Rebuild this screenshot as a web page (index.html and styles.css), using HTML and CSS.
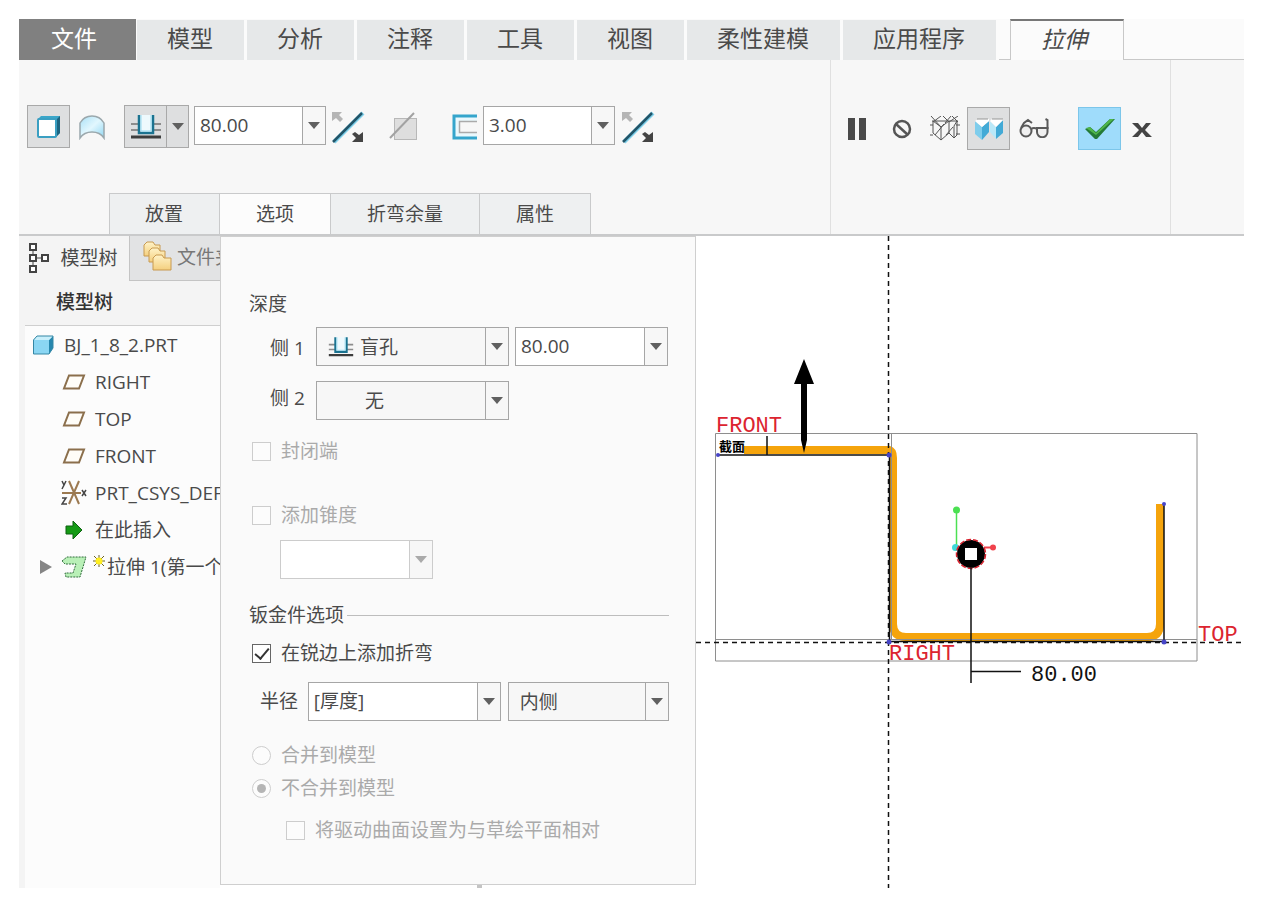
FILE: index.html
```html
<!DOCTYPE html>
<html lang="zh-CN">
<head>
<meta charset="utf-8">
<title>拉伸</title>
<link rel="stylesheet" href="styles.css">
</head>
<body>
<svg width="0" height="0" class="defs" aria-hidden="true">
  <defs>
    <linearGradient id="blueFace" x1="0" y1="0" x2="1" y2="1"><stop offset="0" stop-color="#a9e0f6"/><stop offset="0.5" stop-color="#e2f7fe"/><stop offset="1" stop-color="#8fd6f2"/></linearGradient>
    <linearGradient id="folderFace" x1="0" y1="0" x2="0" y2="1"><stop offset="0" stop-color="#fff3c8"/><stop offset="1" stop-color="#f4cf7e"/></linearGradient>
    <symbol id="blind" viewBox="0 0 32 26">
      <path d="M1 10h30M1 16h30" stroke="#8d8d8d" stroke-width="2"/>
      <path d="M9 1v18h14V1" fill="#eef9fd" stroke="#1b7390" stroke-width="2.5"/>
      <path d="M11 1v16h10V1" fill="none" stroke="#9adcf2" stroke-width="1"/>
      <path d="M1 23h30" stroke="#3d3d3d" stroke-width="3"/>
    </symbol>
    <symbol id="flip" viewBox="0 0 34 34">
      <path d="M3 32 32 3" stroke="#7fd0ea" stroke-width="4"/>
      <path d="M2 32 31 3" stroke="#215468" stroke-width="2.5"/>
      <path d="M1 2h10l-3 3 4 4-3 3-4-4-4 3z" fill="#b5b5b5"/>
      <path d="M32 32H21l4-4-4-4 3-2 4 3 4-3z" fill="#444"/>
    </symbol>
    <symbol id="plane" viewBox="0 0 24 16">
      <path d="M7 1.5h15l-5 13H2z" fill="#fffdf8" stroke="#8b6f4c" stroke-width="2"/>
    </symbol>
  </defs>
</svg>
<div class="app">
  <nav class="tabs">
    <button class="tab tab-file">文件</button>
    <button class="tab">模型</button>
    <button class="tab">分析</button>
    <button class="tab">注释</button>
    <button class="tab">工具</button>
    <button class="tab">视图</button>
    <button class="tab">柔性建模</button>
    <button class="tab">应用程序</button>
    <span class="tab-gap"></span>
    <button class="tab tab-active">拉伸</button>
    <span class="tab-rest"></span>
  </nav>

  <section class="ribbon">
    <div class="group group-main">
      <div class="tools">
        <button class="tool pressed" aria-label="实体"><svg width="26" height="26" viewBox="0 0 26 26"><path d="M2 5l3-3h19v17l-4 4z" fill="#3aa6c9"/><path d="M20 6l4-4v17l-4 4z" fill="#1d6480"/><rect x="2" y="5" width="18" height="18" rx="1" fill="#fff" stroke="#3a9fc2" stroke-width="2"/></svg></button>
        <button class="tool" aria-label="曲面"><svg width="26" height="26" viewBox="0 0 26 26"><path d="M1 24V9Q5 2 13 2q8 0 12 7v15q-4-6-12-6T1 24z" fill="url(#blueFace)" stroke="#9ba8ad" stroke-width="1.500"/></svg></button>
        <div class="split">
          <button class="split-main" aria-label="盲孔"><svg width="32" height="26"><use href="#blind"/></svg></button>
          <button class="split-arrow" aria-label="深度选项"><i class="caret"></i></button>
        </div>
        <div class="combo combo-tool"><input aria-label="深度值" value="80.00"><button aria-label="深度列表"><i class="caret"></i></button></div>
        <button class="flat" aria-label="反向深度"><svg width="34" height="34"><use href="#flip"/></svg></button>
        <button class="flat flat-cut" aria-label="移除材料"><svg width="30" height="30" viewBox="0 0 30 30"><rect x="5.500" y="6.500" width="22" height="21" fill="#dedede" stroke="#b8b8b8"/><path d="M1 26 25 1" stroke="#a2a2a2" stroke-width="2"/></svg></button>
        <button class="flat flat-thick" aria-label="加厚"><svg width="26" height="28" viewBox="0 0 26 28"><path d="M26 3H3v22h23" fill="#eaf8fd" stroke="#35a5cc" stroke-width="3"/><path d="M26 8.500H8.500v11H26" fill="#f7f7f7" stroke="#aaa" stroke-width="1.500"/></svg></button>
        <div class="combo combo-tool"><input aria-label="厚度值" value="3.00"><button aria-label="厚度列表"><i class="caret"></i></button></div>
        <button class="flat flat-last" aria-label="反向厚度"><svg width="34" height="34"><use href="#flip"/></svg></button>
      </div>
      <div class="subtabs">
        <button class="subtab">放置</button>
        <button class="subtab subtab-on">选项</button>
        <button class="subtab">折弯余量</button>
        <button class="subtab">属性</button>
      </div>
    </div>
    <div class="group group-ctl">
      <button class="ctl" aria-label="暂停"><svg width="18" height="22"><path d="M0 0h7v22H0zM11 0h7v22h-7z" fill="#4a4a4a"/></svg></button>
      <button class="ctl ctl-no" aria-label="无预览"><svg width="20" height="20" viewBox="0 0 20 20"><circle cx="10" cy="10" r="8" fill="none" stroke="#555" stroke-width="2.500"/><path d="M4 5l12 11" stroke="#555" stroke-width="2.500"/></svg></button>
      <button class="ctl" aria-label="分离预览"><svg width="30" height="26" viewBox="0 0 30 26" fill="none" stroke="#555"><path d="M2 5h26M3 5v12l8 7 8-7V5l-8 6zM11 11v13M19 17l5 5 3-3V5l-3 5v12M0 9h3M0 19h3M26 9h4M26 18h4M1 0l10 11M11 0 3 6M13 0l6 6M21 0l-6 7M28 0l-9 6M22 0l6 6M5 19 14 8M16 19l7-8"/></svg></button>
      <button class="tool pressed" aria-label="连接预览"><svg width="28" height="22" viewBox="0 0 28 22"><path d="M0 3v13l7 6V9z" fill="#7fcdec"/><path d="M14 3v11l-7 8V9z" fill="#43aad6"/><path d="M0 3l3-2h11v2L7 9z" fill="#fff"/><path d="M15 3v11l6 7V9z" fill="#b9e8f8"/><path d="M28 2v13l-7 6V9z" fill="#43aad6"/><path d="M15 3l2-2h11v1l-7 7z" fill="#fff"/><path d="M2 1h11M17 1h11" stroke="#969696"/></svg></button>
      <button class="ctl ctl-view" aria-label="校验"><svg width="30" height="20" viewBox="0 0 30 20" fill="none" stroke="#5a5a5a" stroke-width="2"><circle cx="7" cy="13" r="5.500" fill="#f0f0f0"/><path d="M18 10h10.500v4a5 5 0 0 1-10.500 0z" fill="#f0f0f0"/><path d="M12 11q3-2 6 0M2 10l3-5 4-3 4 3M28.500 11V2l-2-1"/></svg></button>
      <button class="tool confirm" aria-label="确定"><svg width="32" height="22" viewBox="0 0 32 22"><path d="M1 11l5-2 6 5L26 1h5L13 21h-2z" fill="#247a37"/><path d="M2 10l4-1 6 6L26 1h4L12 17z" fill="#4fb64a"/></svg></button>
      <button class="ctl ctl-cancel" aria-label="取消"><svg width="20" height="16" viewBox="0 0 20 16"><path d="M0 1h6l4 5 4-5h5l-6 7 7 7h-6l-4-5-4 5H0l7-7z" fill="#444"/></svg></button>
    </div>
    <div class="group group-rest"></div>
  </section>

  <main class="work">
    <aside class="tree">
      <div class="tree-tabs">
        <button class="tree-tab"><svg width="22" height="30" viewBox="0 0 22 30" fill="#fff" stroke="#444" stroke-width="2"><path d="M5 8v14M8 15h6" stroke-width="1"/><path d="M2 1h6v6H2zM2 12h6v6H2zM2 23h6v6H2zM14 12h6v6h-6z"/></svg>模型树</button>
        <button class="tree-tab tree-tab-off"><svg width="30" height="32" viewBox="0 0 30 32" fill="url(#folderFace)" stroke="#c89a50"><path d="M1 15V4l3-3h6l2 3h5v11z"/><path d="M6 21V10l3-3h6l2 3h5v11z"/><path d="M10 29V17l3-3h6l2 3h7v12z"/></svg>文件夹</button>
      </div>
      <h2 class="tree-title">模型树</h2>
      <ul class="tree-list">
        <li class="root"><svg width="22" height="20" viewBox="0 0 22 20"><path d="M1 5l4-4h16v12l-4 6H2z" fill="#8ad6f3"/><path d="M17 5l4-4v12l-4 6z" fill="#2787ae"/><path d="M1 5l4-4h16l-4 4z" fill="#c8effb"/><path d="M1.500 5 5 1h16v12l-4 6H1.500z" fill="none" stroke="#3487a5"/></svg>BJ_1_8_2.PRT</li>
        <li><svg width="24" height="16"><use href="#plane"/></svg>RIGHT</li>
        <li><svg width="24" height="16"><use href="#plane"/></svg>TOP</li>
        <li><svg width="24" height="16"><use href="#plane"/></svg>FRONT</li>
        <li class="csys"><svg width="26" height="26" viewBox="0 0 26 26" fill="none"><path d="M8 1l10 23M18 1 8 24M1 13h19" stroke="#9c7950" stroke-width="2"/><path d="M1 1l2 4 2-4M3 5 1 9M1 18h4l-4 6h5M21 10l4 6M25 10l-4 6" stroke="#444" stroke-width="1.500"/></svg>PRT_CSYS_DEF</li>
        <li><svg width="24" height="20" viewBox="0 0 24 20"><path d="M4 6h7V1l9 9-9 9v-5H4z" fill="#159a15" stroke="#0c6110"/></svg>在此插入</li>
        <li class="feature"><svg width="12" height="14"><path d="M0 0l12 7-12 7z" fill="#858585"/></svg><svg width="26" height="24" viewBox="0 0 26 24"><path d="M1 6l5-4h19l-6 20H5l-1-4h8l3-9H4z" fill="#b9f0b7"/><path d="M1 6l5-4h19l-6 20H5l-1-4h8l3-9H4z" fill="none" stroke="#2f6d3b" stroke-dasharray="2 1"/></svg><svg class="spark" width="12" height="12" viewBox="0 0 12 12"><path d="M6 0v12M0 6h12M1 1l10 10M11 1 1 11" stroke="#6c6220"/><circle cx="6" cy="6" r="3.500" fill="#ffef20"/></svg><span>拉伸 1(第一个</span></li>
      </ul>
    </aside>

    <div class="options-col">
      <form class="options">
        <h3 class="heading">深度</h3>
        <div class="row row-side">
          <label for="side1">侧 1</label>
          <div class="pick pick-wide pick-icon"><svg width="26" height="24" viewBox="0 0 32 26"><use href="#blind" width="32" height="26"/></svg><select id="side1"><option>盲孔</option></select></div>
          <div class="combo combo-value"><input aria-label="侧 1 深度" value="80.00"><button type="button" aria-label="深度列表"><i class="caret"></i></button></div>
        </div>
        <div class="row row-side row-side2">
          <label for="side2">侧 2</label>
          <div class="pick pick-wide pick-none"><select id="side2"><option>无</option></select></div>
        </div>
        <label class="check check-cap"><input type="checkbox" disabled>封闭端</label>
        <label class="check check-taper"><input type="checkbox" disabled>添加锥度</label>
        <div class="combo combo-value combo-off"><input aria-label="锥度" disabled><button type="button" disabled aria-label="锥度列表"><i class="caret"></i></button></div>
        <h3 class="heading heading-line">钣金件选项</h3>
        <label class="check check-bend"><input type="checkbox" checked>在锐边上添加折弯</label>
        <div class="row row-radius">
          <label for="radius">半径</label>
          <div class="combo combo-radius"><input id="radius" value="[厚度]"><button type="button" aria-label="半径列表"><i class="caret"></i></button></div>
          <div class="pick pick-side"><select aria-label="半径侧"><option>内侧</option></select></div>
        </div>
        <label class="check check-merge"><input type="radio" name="merge" disabled>合并到模型</label>
        <label class="check check-nomerge"><input type="radio" name="merge" checked disabled>不合并到模型</label>
        <label class="check check-drive"><input type="checkbox" disabled>将驱动曲面设置为与草绘平面相对</label>
      </form>
      <div class="grip"></div>
    </div>

    <div class="canvas">
      <svg class="drawing" viewBox="696 236 548 652" preserveAspectRatio="xMinYMin meet" fill="none">
        <path d="M744 450H889Q893 451 893 458V624Q893 637 906 637H1147Q1160 637 1160 624V504" stroke="#f5a40c" stroke-width="8"/>
        <path d="M715.500 433.500H1197V661H715.500zM715.500 639.500H1197M891.500 433V640" stroke="#8e8e8e"/>
        <path d="M888.500 236V888M696 642.500H1244" stroke="#111" stroke-width="1.500" stroke-dasharray="5 4"/>
        <path d="M719 455H889.500V641.500H1164V504M767 436V455" stroke="#111" stroke-width="1.500"/>
        <path d="M804 359l10 25h-7v56l-3 13-3-13v-56h-7z" fill="#000"/>
        <g fill="#4745c8"><circle cx="718" cy="455" r="2"/><circle cx="889" cy="455" r="2.500"/><circle cx="889" cy="642" r="2.500"/><circle cx="1164" cy="642" r="2.500"/><circle cx="1164" cy="504" r="2"/></g>
        <path d="M956.500 510V547" stroke="#4be052" stroke-width="1.500"/>
        <circle cx="956.500" cy="510" r="3.500" fill="#4be052"/>
        <circle cx="955.500" cy="547.500" r="3.500" fill="#40d9d9"/>
        <path d="M984 547.500H993" stroke="#f0424c" stroke-width="2"/>
        <circle cx="993" cy="547.500" r="3" fill="#f0424c"/>
        <circle cx="971" cy="554" r="14" fill="#000"/>
        <circle cx="971" cy="554" r="14.500" stroke="#d8222e" stroke-width="1.500" stroke-dasharray="5 2"/>
        <rect x="965" y="548" width="12" height="12" fill="#fff"/>
        <path d="M971 568V683M971 671.500H1021" stroke="#111" stroke-width="1.500"/>
        <g class="cad-text">
          <text x="716" y="432">FRONT</text>
          <text x="1198" y="641">TOP</text>
          <text x="889" y="660">RIGHT</text>
          <text class="cad-dim" x="1031" y="681">80.00</text>
        </g>
        <text class="cad-section" x="719" y="451">截面</text>
      </svg>
    </div>
  </main>
</div>
</body>
</html>
```

FILE: styles.css
```css
* { box-sizing: border-box; }
body {
  margin: 0;
  background: #fff;
  color: #4a4a4a;
  font: 19px/24px "Open Sans", "Noto Sans CJK SC", sans-serif;
}
.defs { position: absolute; }
button, input, select { font: inherit; color: inherit; margin: 0; }
button { padding: 0; border: 0; background: none; display: flex; align-items: center; justify-content: center; }
svg { display: block; flex: none; }
h2, h3, ul { margin: 0; padding: 0; font-weight: 400; font-size: inherit; }
.app {
  min-height: 100vh;
  padding: 19px 18px 15px 19px;
  display: flex;
  flex-direction: column;
}

/* Ribbon tabs */
.tabs { display: flex; height: 41px; background: #fbfbfb; }
.tab {
  padding: 0 30px 4px;
  margin: 1px 3px 0 0;
  background: #e6e8e9;
  font-size: 23px;
  white-space: nowrap;
  border-right: 1px solid #e6e8e9;
}
.tab-file { margin: 0 1px 0 0; padding: 0 38px 4px 32px; background: #808080; color: #fff; border-right-color: #808080; }
.tab-gap { width: 11px; border-bottom: 1px solid #c8c8c8; }
.tab-active {
  margin: 0;
  padding: 0 36px 4px 30px;
  background: #fbfbfb;
  border: 1px solid #c8c8c8;
  border-top: 2px solid #777;
  border-bottom: 0;
  font-style: italic;
}
.tab-rest { flex: 1; border-bottom: 1px solid #c8c8c8; }

/* Ribbon body */
.ribbon { display: flex; height: 176px; background: #f7f7f7; border-bottom: 2px solid #c9cacb; }
.group { border-right: 1px solid #e0e0e0; }
.group-main { width: 812px; display: flex; flex-direction: column; justify-content: space-between; }
.group-ctl { width: 340px; display: flex; align-items: flex-start; padding: 47px 0 0 17px; }
.group-rest { flex: 1; border: 0; }
.tools { display: flex; align-items: center; padding: 45px 0 0 8px; }
.tool { width: 43px; height: 43px; flex: none; }
.pressed { background: #dedfe0; border: 1px solid #a9a9a9; }
.confirm { background: #9fdcfb; border: 1px solid #7cc6ea; margin: 0 11px 0 29px; }
.split { display: flex; width: 65px; height: 43px; margin: 0 5px 0 11px; background: #dedfe0; border: 1px solid #a9a9a9; }
.split-main { flex: 1; }
.split-arrow { width: 22px; border-left: 1px solid #a9a9a9; }
.caret { border: 6px solid transparent; border-top: 7px solid #606060; border-bottom: 0; }
.combo { display: flex; height: 39px; border: 1px solid #a6a6a6; background: #fff; }
.combo input { flex: 1; min-width: 0; padding: 0 5px 2px; border: 0; background: #fff; }
.combo button { width: 23px; border-left: 1px solid #a6a6a6; background: #f7f7f7; }
.combo-tool { width: 132px; }
.tools .combo { margin-bottom: 2px; }
.flat { margin-left: 5px; }
.flat-cut { margin-left: 24px; }
.flat-thick { margin: 0 6px 0 32px; }
.flat-last { margin-left: 6px; }
.ctl { height: 43px; }
.ctl-no { margin: 0 18px 0 26px; }
.ctl + .tool.pressed { margin-left: 7px; }
.ctl-view { margin-left: 9px; padding-bottom: 2px; }
.ctl-cancel { padding-top: 2px; }

.subtabs { display: flex; padding-left: 90px; }
.subtab { height: 41px; padding: 0 36px; background: #eef0f1; border: 1px solid #c9cacb; border-width: 1px 1px 0 0; }
.subtab:first-child { border-left-width: 1px; padding: 0 36px 0 35px; }
.subtab-on { background: #fcfcfc; }

/* Work area */
.work { flex: 1; display: grid; grid-template-columns: 201px 476px 1fr; }
.tree { overflow: hidden; background: #f4f4f4; display: flex; flex-direction: column; }
.tree-tabs { display: flex; height: 45px; }
.tree-tab { flex: none; width: 110px; gap: 10px; padding: 0 2px 2px 0; white-space: nowrap; }
.tree-tab-off { width: 130px; gap: 4px; justify-content: flex-start; padding-left: 13px; color: #777; background: #e2e3e4; border: 1px solid #c4c4c4; border-width: 0 0 1px 1px; }
.tree-title { height: 45px; margin-left: 6px; padding: 9px 0 0 31px; border-bottom: 1px solid #cfcfcf; font-weight: 500; color: #333; }
.tree-list { flex: 1; list-style: none; margin-left: 6px; background: #fcfcfc; }
.tree-list li { height: 37px; display: flex; align-items: center; padding-left: 37px; gap: 9px; white-space: nowrap; }
.tree-list .root { padding-left: 7px; gap: 10px; }
.tree-list .csys { padding-left: 36px; gap: 8px; }
.tree-list .feature { padding-left: 15px; gap: 0; }
.feature svg + svg { margin-left: 9px; }
.feature .spark { margin: 0 2px 12px 6px; }

/* Options panel */
.options-col { display: flex; flex-direction: column; }
.options { padding: 55px 26px 42px 28px; background: #fafafa; border: 1px solid #cfcfcf; }
.heading { height: 24px; }
.row { display: flex; }
.row-side { margin-top: 11px; }
.row-side label { width: 67px; padding: 9px 0 0 21px; }
.row-side2 { margin-top: 15px; }
.row-side2 label { padding-top: 5px; }
.pick { position: relative; height: 39px; border: 1px solid #a6a6a6; background: #f7f7f7; }
.pick select { width: 100%; height: 100%; padding: 0 30px 0 11px; border: 0; appearance: none; background: none; }
.pick::before { content: ""; position: absolute; top: 0; bottom: 0; right: 22px; border-left: 1px solid #a6a6a6; pointer-events: none; }
.pick::after { content: ""; position: absolute; top: 15px; right: 5px; border: 6px solid transparent; border-top: 7px solid #606060; border-bottom: 0; pointer-events: none; }
.pick-wide { width: 193px; margin-right: 6px; }
.pick-icon { display: flex; align-items: center; padding-left: 11px; }
.pick-icon select { padding-left: 6px; }
.pick-none select { padding-left: 48px; }
.combo-value { width: 153px; }
.combo-off { margin: 13px 0 0 31px; border-color: #ccc; }
.combo-off button { border-color: #ccc; }
.combo-off .caret { border-top-color: #aaa; }
.heading-line { margin-top: 24px; display: flex; align-items: center; gap: 3px; }
.heading-line::after { content: ""; flex: 1; border-top: 1px solid #bdbdbd; }
.check { display: flex; align-items: center; gap: 10px; height: 24px; padding-left: 3px; }
.check input { appearance: none; width: 19px; height: 19px; border: 1px solid #666; background: #fff; display: grid; place-items: center; }
.check input[type="radio"] { border-radius: 50%; }
.check input:disabled { border-color: #cdcdcd; background: #fcfcfc; }
.check:has(input:disabled) { color: #aaa; }
.check input[type="checkbox"]:checked::before { content: ""; width: 6px; height: 12px; margin-bottom: 3px; border: solid #333; border-width: 0 2px 2px 0; rotate: 40deg; }
.check input[type="radio"]:checked::before { content: ""; width: 9px; height: 9px; border-radius: 50%; background: #b5b5b5; }
.check-cap { margin-top: 19px; }
.check-taper { margin-top: 40px; }
.check-bend { margin-top: 14px; }
.row-radius { margin-top: 17px; padding-left: 11px; }
.row-radius label { width: 48px; padding-top: 7px; }
.combo-radius { width: 193px; margin-right: 7px; }
.pick-side { width: 162px; }
.check-merge { margin-top: 22px; }
.check-nomerge { margin-top: 9px; }
.check-drive { margin: 18px 0 0 34px; white-space: nowrap; }
.grip { width: 5px; height: 3px; margin-left: 257px; background: #c4c4c4; }

/* Graphics window */
.canvas { display: flex; min-width: 0; background: #fff; }
.drawing { width: 100%; height: 100%; }
.cad-text { font-family: "Liberation Mono", monospace; font-size: 22px; fill: #dc2430; }
.cad-dim { fill: #111; }
.cad-section { font-family: "Noto Sans CJK SC", sans-serif; font-size: 13px; font-weight: 700; fill: #000; }
```
